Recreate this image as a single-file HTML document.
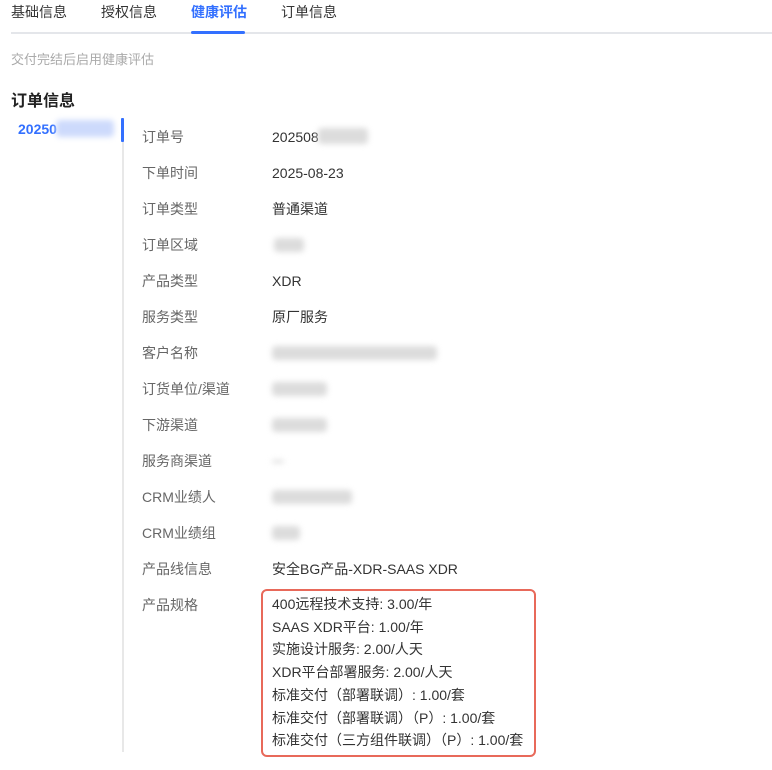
<!DOCTYPE html>
<html><head><meta charset="utf-8"><style>
body{margin:0;width:772px;height:770px;background:#fff;font-family:"Liberation Sans","Noto Sans CJK SC",sans-serif;position:relative;overflow:hidden;color:#333}
.a{position:absolute;white-space:nowrap}
.tab{top:3px;font-size:14px;color:#333;line-height:18px}
.lab{left:142px;font-size:14px;color:#666;line-height:18px}
.val{left:272px;font-size:14px;color:#333;line-height:18px}
.bl{position:absolute;background:#dcdcdc;filter:blur(3px);border-radius:4px}
.sp{font-size:14px;line-height:22.7px;color:#333}
</style></head><body>
<div class="a tab" style="left:11px">基础信息</div>
<div class="a tab" style="left:101px">授权信息</div>
<div class="a tab" style="left:191px;color:#3370ff;font-weight:bold">健康评估</div>
<div class="a tab" style="left:281px">订单信息</div>
<div class="a" style="left:11px;top:32px;width:761px;height:2px;background:#e4e6ea"></div>
<div class="a" style="left:191px;top:31px;width:54px;height:3px;background:#3370ff;border-radius:2px"></div>
<div class="a" style="left:11px;top:49px;font-size:13px;color:#aaa">交付完结后启用健康评估</div>
<div class="a" style="left:11px;top:87px;font-size:16px;font-weight:bold;color:#222">订单信息</div>
<div class="a" style="left:18px;top:121px;font-size:14px;font-weight:bold;color:#3370ff">20250</div>
<div class="bl" style="left:56px;top:120px;width:58px;height:17px;background:#cddafc"></div>
<div class="a" style="left:122px;top:118px;width:2px;height:634px;background:#e8e8e8"></div>
<div class="a" style="left:121px;top:118px;width:3px;height:24px;background:#3370ff;border-radius:1px"></div>

<div class="a lab" style="top:128px">订单号</div><div class="a val" style="top:128px">202508</div><div class="bl" style="left:318px;top:128px;width:50px;height:16px"></div>
<div class="a lab" style="top:164px">下单时间</div><div class="a val" style="top:164px">2025-08-23</div>
<div class="a lab" style="top:200px">订单类型</div><div class="a val" style="top:200px">普通渠道</div>
<div class="a lab" style="top:236px">订单区域</div><div class="bl" style="left:274px;top:238px;width:30px;height:14px"></div>
<div class="a lab" style="top:272px">产品类型</div><div class="a val" style="top:272px">XDR</div>
<div class="a lab" style="top:308px">服务类型</div><div class="a val" style="top:308px">原厂服务</div>
<div class="a lab" style="top:344px">客户名称</div><div class="bl" style="left:272px;top:346px;width:165px;height:14px"></div>
<div class="a lab" style="top:380px">订货单位/渠道</div><div class="bl" style="left:272px;top:382px;width:55px;height:14px"></div>
<div class="a lab" style="top:416px">下游渠道</div><div class="bl" style="left:272px;top:418px;width:55px;height:14px"></div>
<div class="a lab" style="top:452px">服务商渠道</div><div class="bl" style="left:272px;top:460px;width:12px;height:3px"></div>
<div class="a lab" style="top:488px">CRM业绩人</div><div class="bl" style="left:272px;top:490px;width:80px;height:14px"></div>
<div class="a lab" style="top:524px">CRM业绩组</div><div class="bl" style="left:272px;top:526px;width:28px;height:14px"></div>
<div class="a lab" style="top:560px">产品线信息</div><div class="a val" style="top:560px">安全BG产品-XDR-SAAS XDR</div>
<div class="a lab" style="top:596px">产品规格</div>
<div class="a" style="left:261px;top:589px;width:271px;height:164px;border:2px solid #e8695a;border-radius:6px"></div>
<div class="a sp" style="left:272px;top:593px">400远程技术支持: 3.00/年<br>SAAS XDR平台: 1.00/年<br>实施设计服务: 2.00/人天<br>XDR平台部署服务: 2.00/人天<br>标准交付（部署联调）: 1.00/套<br>标准交付（部署联调）（P）: 1.00/套<br>标准交付（三方组件联调）（P）: 1.00/套</div>
</body></html>
